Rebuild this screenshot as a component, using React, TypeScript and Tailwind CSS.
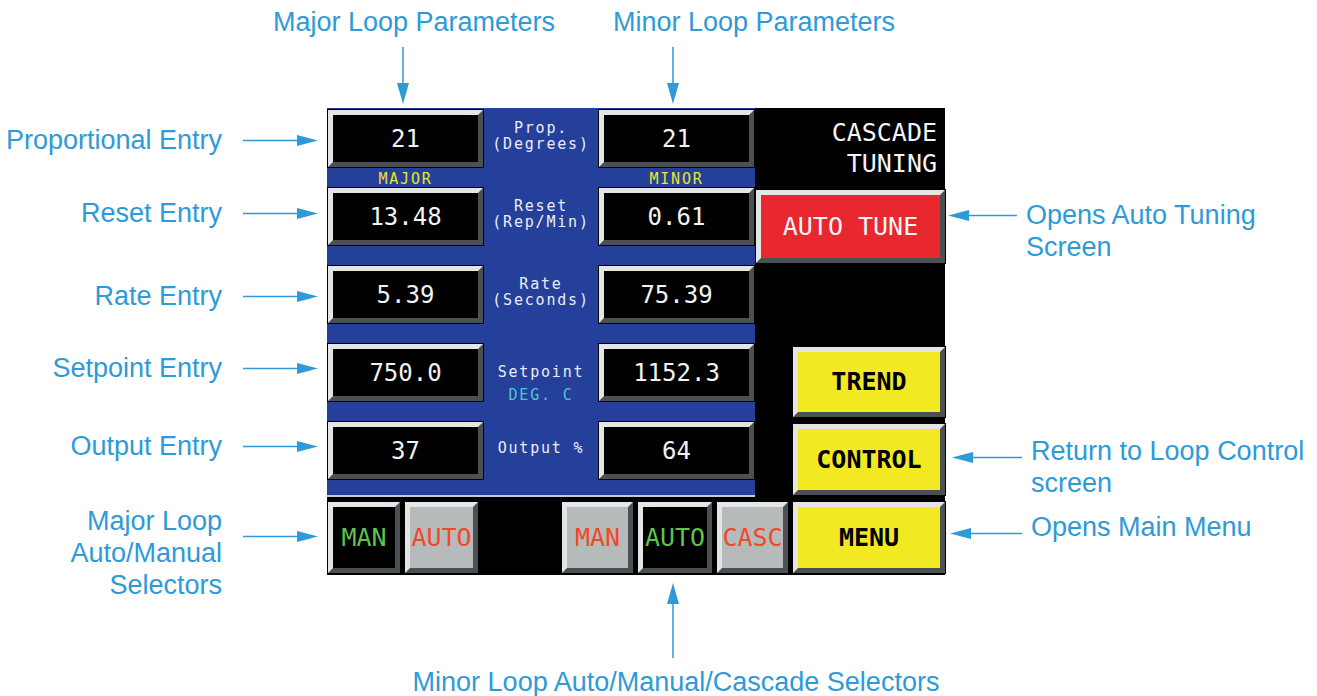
import React from "react";

const BLUE_TEXT = "#2e9ad7";

function RightArrow() {
  return (
    <svg width="75" height="11" className="shrink-0">
      <line x1="0" y1="5.5" x2="56" y2="5.5" stroke={BLUE_TEXT} strokeWidth="1.5" />
      <polygon points="54,0 75,5.5 54,11" fill={BLUE_TEXT} />
    </svg>
  );
}

function LeftArrow({ width }: { width: number }) {
  return (
    <svg width={width} height="11" className="shrink-0">
      <polygon points="0,5.5 21,0 21,11" fill={BLUE_TEXT} />
      <line x1="19" y1="5.5" x2={width} y2="5.5" stroke={BLUE_TEXT} strokeWidth="1.5" />
    </svg>
  );
}

function DownArrow({ height }: { height: number }) {
  return (
    <svg width="12" height={height} className="shrink-0">
      <line x1="6" y1="0" x2="6" y2={height - 19} stroke={BLUE_TEXT} strokeWidth="1.5" />
      <polygon points={`0,${height - 21} 12,${height - 21} 6,${height}`} fill={BLUE_TEXT} />
    </svg>
  );
}

function UpArrow({ height }: { height: number }) {
  return (
    <svg width="12" height={height} className="shrink-0">
      <polygon points="6,0 0,21 12,21" fill={BLUE_TEXT} />
      <line x1="6" y1="19" x2="6" y2={height} stroke={BLUE_TEXT} strokeWidth="1.5" />
    </svg>
  );
}

type BevelProps = {
  className?: string;
  face: string;
  children?: React.ReactNode;
};

// raised panel button: light top/left, dark bottom/right
function Bevel({ className = "", face, children }: BevelProps) {
  return (
    <div
      className={`shrink-0 border-[5px] border-t-[#e4e6e6] border-l-[#e4e6e6] border-r-[#4b5052] border-b-[#4b5052] shadow-[0_0_0_1px_#000] ${className}`}
    >
      <div className={`flex h-full w-full items-center justify-center ${face}`}>{children}</div>
    </div>
  );
}

function ValueBox({ value }: { value: string }) {
  return (
    <Bevel className="h-[57px] w-[155px]" face="bg-black text-[24px] text-[#f2f2f2]">
      {value}
    </Bevel>
  );
}

function Label({ lines }: { lines: string[] }) {
  return (
    <div className="flex flex-col items-center justify-center pb-[5px] text-[15px] leading-[16px] tracking-[1.8px] text-[#ecedf4]">
      {lines.map((l) => (
        <span key={l}>{l}</span>
      ))}
    </div>
  );
}

const rows = [
  { left: "21", label: ["Prop.", "(Degrees)"], right: "21" },
  { left: "13.48", label: ["Reset", "(Rep/Min)"], right: "0.61" },
  { left: "5.39", label: ["Rate", "(Seconds)"], right: "75.39" },
  { left: "750.0", label: null, right: "1152.3" },
  { left: "37", label: ["Output %"], right: "64" },
];

function BluePanel() {
  return (
    <div className="h-[389px] w-[428px] border-b-2 border-[#c4c9dc] bg-[#24409a] pl-[1px] pt-[2px]">
      <div className="grid grid-cols-[155px_116px_155px] grid-rows-[57px_21px_57px_21px_57px_21px_57px_21px_57px]">
        {rows.map((r, i) => (
          <React.Fragment key={i}>
            <ValueBox value={r.left} />
            {r.label ? (
              <Label lines={r.label} />
            ) : (
              <div className="flex flex-col items-center text-[15px] leading-[16px] tracking-[1.8px]">
                <span className="mt-[20px] text-[#ecedf4]">Setpoint</span>
                <span className="mt-[7px] text-[#52c4d0]">DEG. C</span>
              </div>
            )}
            <ValueBox value={r.right} />
            {i === 0 && (
              <>
                <div className="pt-[4px] text-center text-[15px] leading-[16px] tracking-[1.8px] text-[#e9e52a]">MAJOR</div>
                <div />
                <div className="pt-[4px] text-center text-[15px] leading-[16px] tracking-[1.8px] text-[#e9e52a]">MINOR</div>
              </>
            )}
            {i > 0 && i < rows.length - 1 && (
              <>
                <div />
                <div />
                <div />
              </>
            )}
          </React.Fragment>
        ))}
      </div>
    </div>
  );
}

function SideColumn() {
  return (
    <div className="flex h-[389px] w-[190px] flex-col bg-black">
      <div className="h-[82px] pr-[8px] pt-[9px] text-right text-[25px] leading-[31px] text-[#f4f4f4]">
        <div>CASCADE</div>
        <div>TUNING</div>
      </div>
      <Bevel className="ml-[1px] h-[73px] w-[189px]" face="bg-[#e8282e] text-[25px] text-[#f6f6f6]">
        AUTO TUNE
      </Bevel>
      <Bevel className="ml-[38px] mt-[84px] h-[70px] w-[152px]" face="bg-[#f3e923] text-[25px] font-bold text-black">
        TREND
      </Bevel>
      <Bevel className="ml-[38px] mt-[7px] h-[71px] w-[152px]" face="bg-[#f3e923] text-[25px] font-bold text-black">
        CONTROL
      </Bevel>
    </div>
  );
}

function SelectorRow() {
  return (
    <div className="flex h-[78px] gap-[5px] pl-[1px] pt-[5px] text-[25px]">
      <Bevel className="h-[71px] w-[72px]" face="bg-black text-[#5fc44a]">MAN</Bevel>
      <Bevel className="h-[71px] w-[73px]" face="bg-[#b6babb] text-[#f2482a]">AUTO</Bevel>
      <div className="w-[74px] shrink-0" />
      <Bevel className="h-[71px] w-[71px]" face="bg-[#b6babb] text-[#f2482a]">MAN</Bevel>
      <Bevel className="h-[71px] w-[74px]" face="bg-black text-[#5fc44a]">AUTO</Bevel>
      <Bevel className="h-[71px] w-[71px]" face="bg-[#b6babb] text-[#f2482a]">CASC</Bevel>
      <Bevel className="h-[71px] w-[152px]" face="bg-[#f3e923] font-bold text-black">MENU</Bevel>
    </div>
  );
}

function Screen() {
  return (
    <div className="flex h-[467px] w-[618px] shrink-0 flex-col bg-black font-['DejaVu_Sans_Mono',monospace]">
      <div className="flex">
        <BluePanel />
        <SideColumn />
      </div>
      <SelectorRow />
    </div>
  );
}

function LeftNote({ h, text }: { h: number; text: string }) {
  return (
    <div className="flex shrink-0 items-center justify-end pr-[9px]" style={{ height: h }}>
      <span className="whitespace-nowrap">{text}</span>
      <span className="ml-[21px] flex">
        <RightArrow />
      </span>
    </div>
  );
}

export default function App() {
  return (
    <div className="h-[696px] w-[1317px] overflow-hidden bg-white font-['Liberation_Sans',Arial,sans-serif] text-[27px] text-[#2e9ad7]">
      {/* top callouts */}
      <div className="flex h-[108px] pl-[270px]">
        <div className="flex w-[288px] flex-col">
          <div className="h-[47px] pt-[7px] text-center leading-[30px]">Major Loop Parameters</div>
          <div className="ml-[127px] flex">
            <DownArrow height={57} />
          </div>
        </div>
        <div className="ml-[52px] flex w-[288px] flex-col">
          <div className="h-[47px] pt-[7px] text-center leading-[30px]">Minor Loop Parameters</div>
          <div className="ml-[57px] flex">
            <DownArrow height={57} />
          </div>
        </div>
      </div>

      {/* screen with side callouts */}
      <div className="flex h-[467px]">
        <div className="flex w-[327px] shrink-0 flex-col">
          <LeftNote h={64} text="Proportional Entry" />
          <LeftNote h={82} text="Reset Entry" />
          <LeftNote h={84} text="Rate Entry" />
          <LeftNote h={60} text="Setpoint Entry" />
          <LeftNote h={96} text="Output Entry" />
          <div className="mt-[11px] flex shrink-0 justify-end pr-[9px]">
            <div className="text-right leading-[32px]">
              <div>Major Loop</div>
              <div>Auto/Manual</div>
              <div>Selectors</div>
            </div>
            <span className="ml-[21px] mt-[26px] flex h-[11px]">
              <RightArrow />
            </span>
          </div>
        </div>

        <Screen />

        <div className="flex flex-1 flex-col leading-[32px]">
          <div className="mt-[91px] flex shrink-0 pl-[3px]">
            <span className="mt-[11px] flex h-[11px]">
              <LeftArrow width={69} />
            </span>
            <div className="ml-[9px]">
              <div>Opens Auto Tuning</div>
              <div>Screen</div>
            </div>
          </div>
          <div className="mt-[172px] flex shrink-0 pl-[7px]">
            <span className="mt-[17px] flex h-[11px]">
              <LeftArrow width={70} />
            </span>
            <div className="ml-[9px]">
              <div>Return to Loop Control</div>
              <div>screen</div>
            </div>
          </div>
          <div className="mt-[12px] flex shrink-0 pl-[5px]">
            <span className="mt-[17px] flex h-[11px]">
              <LeftArrow width={72} />
            </span>
            <div className="ml-[9px]">Opens Main Menu</div>
          </div>
        </div>
      </div>

      {/* bottom callout */}
      <div className="flex h-[121px] flex-col">
        <div className="ml-[667px] mt-[8px] flex">
          <UpArrow height={75} />
        </div>
        <div className="ml-[396px] mt-[9px] w-[560px] text-center leading-[30px]">
          Minor Loop Auto/Manual/Cascade Selectors
        </div>
      </div>
    </div>
  );
}
